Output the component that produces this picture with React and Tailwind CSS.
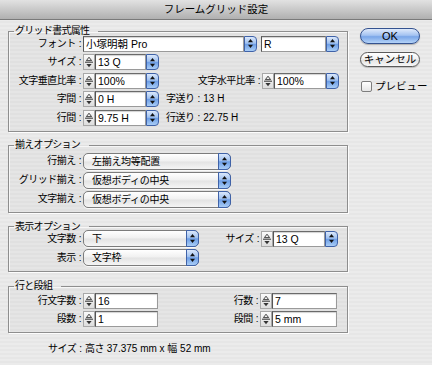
import React from "react";

const FONT = "font-['Liberation_Sans','Noto_Sans_CJK_JP',sans-serif]";

function Spinner() {
  return (
    <svg width="12" height="16" viewBox="0 0 12 16" className="shrink-0">
      <defs>
        <linearGradient id="spg" x1="0" y1="0" x2="0" y2="1">
          <stop offset="0" stopColor="#fbfbfb" />
          <stop offset="1" stopColor="#dcdcdc" />
        </linearGradient>
      </defs>
      <rect x="0.5" y="0.5" width="11" height="15" fill="url(#spg)" stroke="#a8a8a8" />
      <path d="M6 3.2 L8.6 6.6 L3.4 6.6 Z" fill="none" stroke="#333" strokeWidth="0.9" />
      <line x1="2" y1="8.2" x2="10" y2="8.2" stroke="#333" strokeWidth="1" />
      <path d="M3.4 10 L8.6 10 L6 13.2 Z" fill="#333" />
    </svg>
  );
}

function Arrows() {
  return (
    <svg width="7" height="11" viewBox="0 0 7 11">
      <path d="M3.5 1 L6 4.3 L1 4.3 Z" fill="#111" />
      <path d="M1 6.7 L6 6.7 L3.5 10 Z" fill="#111" />
    </svg>
  );
}

function ArrowBtn() {
  return (
    <div className="w-[13px] h-[16px] shrink-0 rounded-r-[4px] border border-[#3f62a8] bg-[linear-gradient(#dbe8fb,#9ec0f0_45%,#6d9ee6_52%,#a9cdf6)] flex items-center justify-center">
      <Arrows />
    </div>
  );
}

function Field({ w, children }) {
  return (
    <div
      className={`${w} h-[16px] shrink-0 bg-white border border-[#9a9a9a] border-t-[#6a6a6a] border-l-[#555] shadow-[inset_0_1px_1px_rgba(0,0,0,0.18)] pl-[2px] leading-[14px] text-[10.5px] text-black overflow-hidden whitespace-nowrap`}
    >
      {children}
    </div>
  );
}

function SpinCombo({ w, value, arrow = true }) {
  return (
    <div className="flex items-center">
      <Spinner />
      <Field w={w}>{value}</Field>
      {arrow && <ArrowBtn />}
    </div>
  );
}

function Popup({ w, value }) {
  return (
    <div
      className={`${w} h-[17px] flex rounded-[5px] border border-[#7c7c7c] bg-[linear-gradient(#ffffff,#f0f0f0_48%,#e3e3e3_52%,#f5f5f5)] shadow-[0_1px_0_rgba(255,255,255,0.8)]`}
    >
      <div className="flex-1 pl-[8px] leading-[15px] text-[10px] tracking-[-0.3px] text-black whitespace-nowrap">{value}</div>
      <div className="w-[13px] -my-[1px] -mr-[1px] rounded-r-[5px] border border-[#3f62a8] bg-[linear-gradient(#dbe8fb,#9ec0f0_45%,#6d9ee6_52%,#a9cdf6)] flex items-center justify-center">
        <Arrows />
      </div>
    </div>
  );
}

function Label({ children, w = "w-[74px]" }) {
  return (
    <div className={`${w} shrink-0 pr-[2px] text-right text-[10px] tracking-[-0.5px] leading-[12px] text-black whitespace-nowrap`}>
      {children}
      <span className="ml-[3px]">:</span>
    </div>
  );
}

function Info({ k, v }) {
  return (
    <div className="ml-[7px] text-[10px] leading-[12px] text-black whitespace-nowrap">
      <span className="tracking-[-0.5px]">{k}</span>
      <span className="ml-[3px] mr-[3px]">:</span>
      {v}
    </div>
  );
}

function Group({ title, className, children }) {
  return (
    <fieldset
      className={`w-[340px] border border-[#8e8e8e] bg-black/[0.025] shadow-[1px_1px_0_rgba(255,255,255,0.9),inset_1px_1px_0_rgba(255,255,255,0.7)] ${className}`}
    >
      <legend className="ml-[5px] pl-[1px] pr-[9px] text-[10px] tracking-[-0.7px] leading-[12px] text-black">{title}</legend>
      {children}
    </fieldset>
  );
}

export default function App() {
  return (
    <div className={`w-[432px] h-[365px] overflow-hidden bg-[repeating-linear-gradient(0deg,#ebebeb_0px,#ebebeb_2px,#e6e6e6_2px,#e6e6e6_4px)] ${FONT} flex flex-col`}>
      <div className="h-[20px] shrink-0 bg-[linear-gradient(#e2e2e2,#b0b0b0)] border-b border-[#7a7a7a] flex items-center justify-center text-[10.5px] text-black">
        フレームグリッド設定
      </div>
      <div className="flex">
        <div className="pl-[8px] flex flex-col">
          <Group title="グリッド書式属性" className="mt-[5px]">
            <div className="-mt-[2px] pb-[5px] pr-[8px] flex flex-col gap-[1.5px]">
              <div className="h-[17px] flex items-center">
                <Label>フォント</Label>
                <Field w="w-[161px]">小塚明朝 Pro</Field>
                <ArrowBtn />
                <div className="ml-[4px] flex items-center">
                  <Field w="w-[65px]">R</Field>
                  <ArrowBtn />
                </div>
              </div>
              <div className="h-[17px] flex items-center">
                <Label>サイズ</Label>
                <SpinCombo w="w-[51px]" value="13 Q" />
              </div>
              <div className="h-[17px] flex items-center">
                <Label>文字垂直比率</Label>
                <SpinCombo w="w-[51px]" value="100%" />
                <div className="ml-auto flex items-center">
                  <Label w="w-auto">文字水平比率</Label>
                  <SpinCombo w="w-[52px]" value="100%" />
                </div>
              </div>
              <div className="h-[17px] flex items-center">
                <Label>字間</Label>
                <SpinCombo w="w-[51px]" value="0 H" />
                <Info k="字送り" v="13 H" />
              </div>
              <div className="h-[17px] flex items-center">
                <Label>行間</Label>
                <SpinCombo w="w-[51px]" value="9.75 H" />
                <Info k="行送り" v="22.75 H" />
              </div>
            </div>
          </Group>

          <Group title="揃えオプション" className="mt-[7px]">
            <div className="mt-[1.5px] pb-[4px] flex flex-col gap-[2px]">
              <div className="h-[17px] flex items-center">
                <Label>行揃え</Label>
                <Popup w="w-[148px]" value="左揃え均等配置" />
              </div>
              <div className="h-[17px] flex items-center">
                <Label>グリッド揃え</Label>
                <Popup w="w-[148px]" value="仮想ボディの中央" />
              </div>
              <div className="h-[17px] flex items-center">
                <Label>文字揃え</Label>
                <Popup w="w-[148px]" value="仮想ボディの中央" />
              </div>
            </div>
          </Group>

          <Group title="表示オプション" className="mt-[8px]">
            <div className="-mt-[2.5px] pb-[5px] pr-[9px] flex flex-col gap-[2px]">
              <div className="h-[17px] flex items-center">
                <Label>文字数</Label>
                <Popup w="w-[116px]" value="下" />
                <div className="ml-auto flex items-center">
                  <Label w="w-auto">サイズ</Label>
                  <SpinCombo w="w-[52px]" value="13 Q" />
                </div>
              </div>
              <div className="h-[17px] flex items-center">
                <Label>表示</Label>
                <Popup w="w-[116px]" value="文字枠" />
              </div>
            </div>
          </Group>

          <Group title="行と段組" className="mt-[8px]">
            <div className="mt-[0.5px] pb-[4px] pr-[10px] flex flex-col gap-[1px]">
              <div className="h-[17px] flex items-center">
                <Label>行文字数</Label>
                <SpinCombo w="w-[63px]" value="16" arrow={false} />
                <div className="ml-auto flex items-center">
                  <Label w="w-auto">行数</Label>
                  <SpinCombo w="w-[65px]" value="7" arrow={false} />
                </div>
              </div>
              <div className="h-[17px] flex items-center">
                <Label>段数</Label>
                <SpinCombo w="w-[63px]" value="1" arrow={false} />
                <div className="ml-auto flex items-center">
                  <Label w="w-auto">段間</Label>
                  <SpinCombo w="w-[65px]" value="5 mm" arrow={false} />
                </div>
              </div>
            </div>
          </Group>

          <div className="mt-[10px] ml-[40px] text-[10px] leading-[12px] text-black whitespace-nowrap">
            <span className="tracking-[-0.5px]">サイズ</span>
            <span className="ml-[3px] mr-[3px]">:</span>
            <span className="tracking-[-0.5px]">高さ</span> 37.375 mm x <span>幅</span> 52 mm
          </div>
        </div>

        <div className="ml-[12px] mt-[8px] flex flex-col">
          <div className="w-[60px] h-[16px] rounded-full border border-[#34528f] bg-[linear-gradient(#dfeafb,#a4c3f1_45%,#7aa6e8_55%,#b4d3f8)] flex items-center justify-center text-[11px] leading-[14px] text-black shadow-[0_1px_1px_rgba(0,0,0,0.25)]">
            OK
          </div>
          <div className="mt-[8px] w-[60px] h-[15px] rounded-full border border-[#5a5a5a] bg-[linear-gradient(#ffffff,#f1f1f1_48%,#e2e2e2_52%,#f7f7f7)] flex items-center justify-center text-[10.5px] leading-[13px] text-black shadow-[0_1px_1px_rgba(0,0,0,0.2)]">
            キャンセル
          </div>
          <div className="mt-[13px] ml-[1px] flex items-center">
            <div className="w-[11px] h-[11px] rounded-[2px] border border-[#7d7d7d] bg-[linear-gradient(#ffffff,#e6e6e6)]" />
            <div className="ml-[3px] text-[10.5px] leading-[12px] text-black">プレビュー</div>
          </div>
        </div>
      </div>
    </div>
  );
}
